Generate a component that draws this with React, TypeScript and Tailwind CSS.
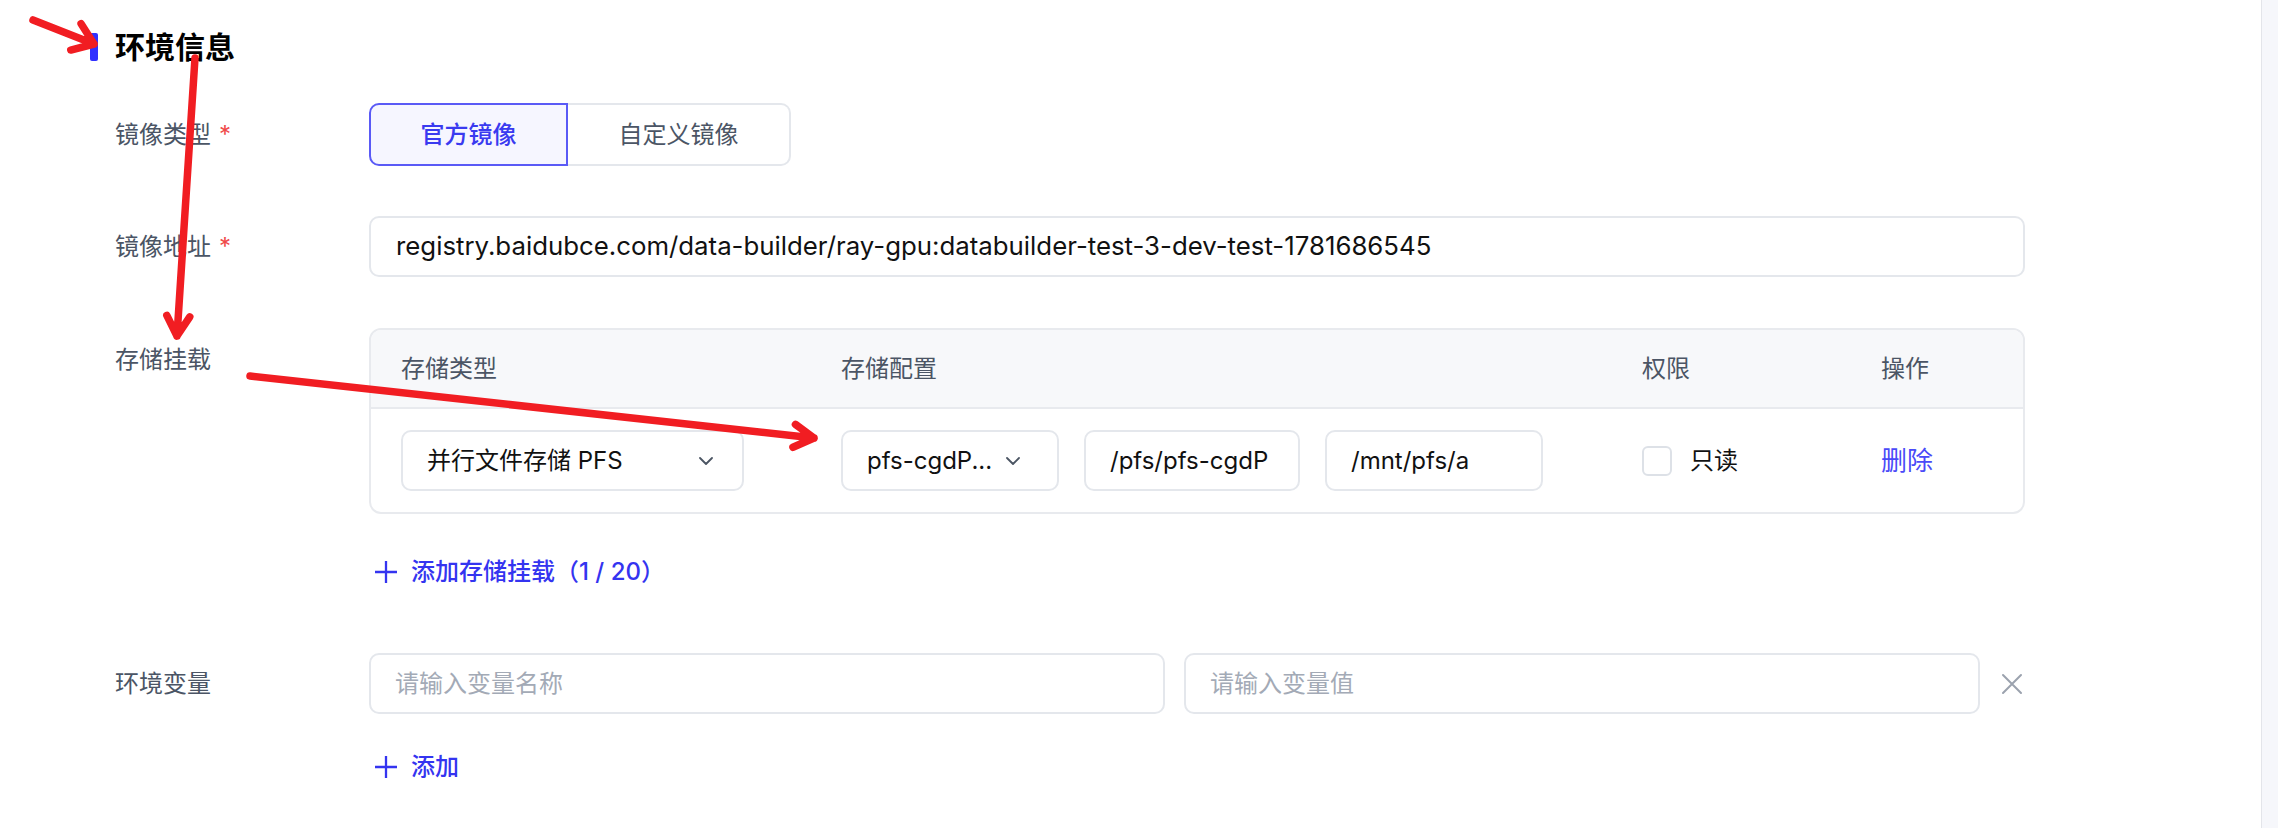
import React from "react";

const FONT = "font-['Inter','Noto_Sans_CJK_SC',sans-serif]";

function Arrow({
  x1,
  y1,
  x2,
  y2,
  head = 23,
  spread = 33,
}: {
  x1: number;
  y1: number;
  x2: number;
  y2: number;
  head?: number;
  spread?: number;
}) {
  const a = Math.atan2(y2 - y1, x2 - x1);
  const r = (spread * Math.PI) / 180;
  const p1 = [x2 - head * Math.cos(a - r), y2 - head * Math.sin(a - r)];
  const p2 = [x2 - head * Math.cos(a + r), y2 - head * Math.sin(a + r)];
  return (
    <path
      d={`M${x1} ${y1} L${x2} ${y2} M${p1[0]} ${p1[1]} L${x2} ${y2} L${p2[0]} ${p2[1]}`}
      fill="none"
      stroke="#f11d22"
      strokeWidth={7.5}
      strokeLinecap="round"
      strokeLinejoin="round"
    />
  );
}

function Chevron() {
  return (
    <svg width="14" height="8" viewBox="0 0 14 8" className="shrink-0">
      <path d="M1 1 L7 7 L13 1" fill="none" stroke="#4b5563" strokeWidth="1.8" strokeLinecap="round" strokeLinejoin="round" />
    </svg>
  );
}

function Plus() {
  return (
    <svg width="24" height="24" viewBox="0 0 24 24" className="shrink-0">
      <path d="M12 1 V23 M1 12 H23" stroke="#3434f0" strokeWidth="2.3" />
    </svg>
  );
}

function Label({ text, required }: { text: string; required?: boolean }) {
  return (
    <div className="w-[254px] shrink-0 text-[24px] leading-[32px] text-[#4b5565]">
      {text}
      {required ? <span className="ml-[8px] text-[#f04a4a]">*</span> : null}
    </div>
  );
}

const box = "flex h-[61px] items-center rounded-[10px] border-2 border-[#e4e7ec] bg-white px-[24px] text-[24px] text-[#111]";

export default function App() {
  return (
    <div className={`relative h-[828px] w-full overflow-hidden bg-white ${FONT}`}>
      <div className="flex h-full">
        <main className="flex-1 pl-[90px] pt-[33px]">
          <div className="flex h-[28px] items-center gap-[17px]">
            <span className="h-[28px] w-[8px] rounded-[2px] bg-[#3030ff]" />
            <h2 className="text-[30px] font-bold leading-none text-black">环境信息</h2>
          </div>

          <div className="pl-[25px]">
            <div className="mt-[42px] flex items-center">
              <Label text="镜像类型" required />
              <div className="flex h-[63px] text-[24px]">
                <button className="w-[199px] rounded-l-[10px] border-2 border-[#5a5af6] bg-[#f6f6ff] font-medium text-[#3a3af0]">
                  官方镜像
                </button>
                <button className="w-[223px] rounded-r-[10px] border-2 border-l-0 border-[#e4e7ec] bg-white text-[#4b5565]">
                  自定义镜像
                </button>
              </div>
            </div>

            <div className="mt-[50px] flex items-center">
              <Label text="镜像地址" required />
              <div className={`${box} w-[1656px] pl-[25px] text-[25.8px]`}>
                registry.baidubce.com/data-builder/ray-gpu:databuilder-test-3-dev-test-1781686545
              </div>
            </div>

            <div className="mt-[51px] flex items-start">
              <div className="pt-[16px]">
                <Label text="存储挂载" />
              </div>
              <div className="w-[1656px]">
                <div className="overflow-hidden rounded-[12px] border-2 border-[#e8eaee]">
                  <div className="grid h-[79px] grid-cols-[440px_801px_239px_1fr] items-center border-b-2 border-[#e8eaee] bg-[#f7f8fa] pl-[30px] text-[24px] text-[#4b5565]">
                    <span>存储类型</span>
                    <span>存储配置</span>
                    <span>权限</span>
                    <span>操作</span>
                  </div>
                  <div className="grid h-[103px] grid-cols-[440px_801px_239px_1fr] items-center pl-[30px]">
                    <div className={`${box} w-[343px] justify-between`}>
                      <span>并行文件存储 PFS</span>
                      <span className="mr-[5px]">
                        <Chevron />
                      </span>
                    </div>
                    <div className="flex gap-[25px]">
                      <div className={`${box} w-[218px] gap-[14px]`}>
                        <span>pfs-cgdP...</span>
                        <Chevron />
                      </div>
                      <div className={`${box} w-[216px] overflow-hidden whitespace-nowrap`}>/pfs/pfs-cgdP</div>
                      <div className={`${box} w-[218px]`}>/mnt/pfs/a</div>
                    </div>
                    <label className="flex items-center gap-[18px] text-[24px] text-[#111]">
                      <span className="h-[30px] w-[30px] rounded-[6px] border-2 border-[#dde1e7] bg-white" />
                      只读
                    </label>
                    <button className="text-left text-[26px] text-[#4a4af8]">删除</button>
                  </div>
                </div>

                <button className="mt-[43px] flex h-[30px] items-center gap-[13px] pl-[5px] text-[24px] font-medium text-[#3434f0]">
                  <Plus />
                  <span>
                    添加存储挂载（1&nbsp;/&nbsp;20）
                  </span>
                </button>
              </div>
            </div>

            <div className="mt-[66px] flex items-center">
              <Label text="环境变量" />
              <div className="flex w-[1656px] items-center gap-[19px]">
                <div className={`${box} flex-1 text-[#a3aab6]`}>请输入变量名称</div>
                <div className={`${box} flex-1 text-[#a3aab6]`}>请输入变量值</div>
                <div className="flex w-[26px] justify-center">
                  <svg width="22" height="22" viewBox="0 0 22 22">
                    <path d="M2 2 L20 20 M20 2 L2 20" stroke="#9ba2ae" strokeWidth="2" strokeLinecap="round" />
                  </svg>
                </div>
              </div>
            </div>

            <div className="flex">
              <div className="w-[254px] shrink-0" />
              <button className="mt-[38px] flex h-[30px] items-center gap-[13px] pl-[5px] text-[24px] font-medium text-[#3434f0]">
                <Plus />
                添加
              </button>
            </div>
          </div>
        </main>
        <div className="w-[17px] shrink-0 border-l border-[#e3e5ea] bg-[#f6f7fb]" />
      </div>

      <svg className="pointer-events-none absolute inset-0" width="2278" height="828" viewBox="0 0 2278 828">
        <Arrow x1={33} y1={20} x2={94} y2={44} head={24} spread={36} />
        <Arrow x1={195} y1={58} x2={177} y2={336} head={23} spread={30} />
        <Arrow x1={250} y1={376} x2={814} y2={438} head={23} spread={30} />
      </svg>
    </div>
  );
}
